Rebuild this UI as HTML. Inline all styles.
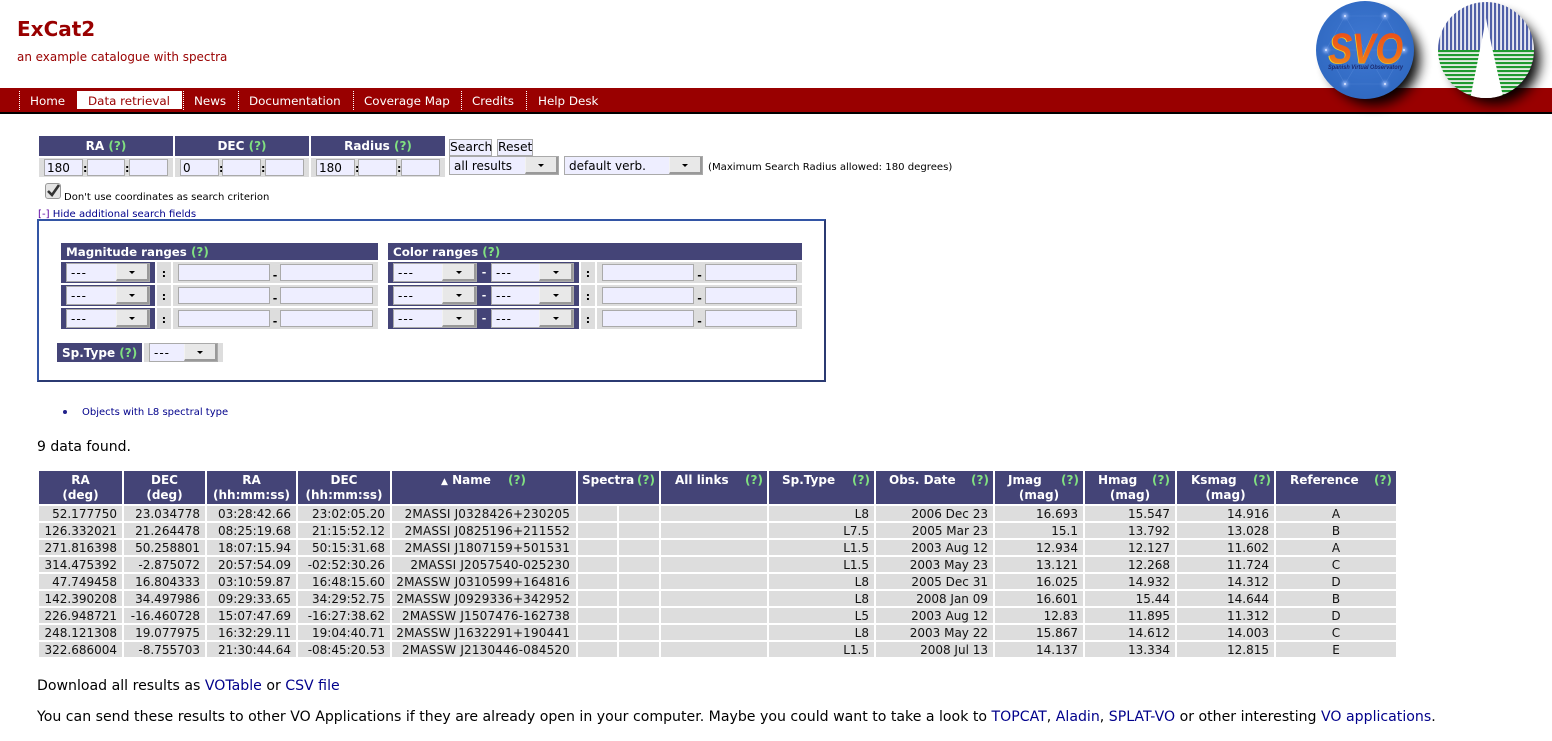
<!DOCTYPE html>
<html><head><meta charset="utf-8"><title>ExCat2</title>
<style>
html,body{margin:0;padding:0;background:#fff;width:1552px;height:741px;overflow:hidden}
body{font-family:"DejaVu Sans",sans-serif;color:#000;position:relative}
.a,.h,.g,.i,.s,.p{position:absolute;box-sizing:border-box}
.t{position:absolute;white-space:nowrap;line-height:1}
a{color:#00008b;text-decoration:none}
.h{background:#444477;color:#fff;font-weight:bold;font-size:12px;white-space:nowrap}
.q{color:#80e080;font-weight:bold;font-size:12px}
.g{background:#dddddd}
.i{background:#eeeeff;border:1.5px solid #aaa;font-size:12px;line-height:16px;padding-left:2px;white-space:nowrap}
.s{background:#eeeeff;border:1px solid #aaa;font-size:12px;white-space:nowrap;line-height:18px;padding-left:4px}
.s u{position:absolute;top:0;bottom:0;right:0;background:#e8e8e8;border-right:2px solid #999;border-bottom:2px solid #999;border-left:1px solid #f2f2f2;text-decoration:none;box-sizing:border-box}
.s u:after{content:"";position:absolute;left:50%;top:50%;margin:-1px 0 0 -3px;border:3px solid transparent;border-top:3px solid #000;border-bottom:0}
.d{letter-spacing:1px}
.p{background:#444477}
.c{position:absolute;font-weight:bold;font-size:11px;line-height:12px;text-align:center}
#nav{position:absolute;left:0;top:88px;width:1552px;height:24px;background:#990000;border-bottom:2px solid #000;box-sizing:content-box}
#nav span{position:absolute;top:3px;height:18px;line-height:20px;color:#fff;font-size:11.9px;white-space:nowrap}
#nav i{position:absolute;top:3px;height:19px;border-left:1px dotted #fff}
table{position:absolute;left:37px;top:504px;border-collapse:separate;border-spacing:2px;table-layout:fixed;font-size:12px;width:1361px}
td{background:#ddd;height:13px;padding:2px 5px 0;line-height:13px;text-align:right;white-space:nowrap;overflow:hidden;color:#111}
td.m{text-align:center;padding:2px 0 0}
td.m2{letter-spacing:.17px;text-align:right;padding:2px 6px 0 0}
td.n{padding:0;height:15px}
td.n s{display:block;width:2px;height:15px;background:#fff;margin-left:39px}
.th{position:absolute;top:471px;height:33px;background:#444477;color:#fff;font-weight:bold;font-size:12px}
.th span{position:absolute;top:2px;line-height:15px;white-space:nowrap}
.th .l{top:17px;left:0;right:0;text-align:center}
.th .q{top:2px}
p{position:absolute;margin:0;font-size:14.11px;line-height:17px;white-space:nowrap;left:37px}
</style></head><body>

<div class="t" style="left:17px;top:18px;font-size:20px;font-weight:bold;color:#990000;line-height:22px">ExCat2</div>
<div class="t" style="left:17px;top:50px;font-size:11.95px;color:#990000;line-height:14px">an example catalogue with spectra</div>

<div id="nav">
<i style="left:19px"></i><span style="left:30px">Home</span>
<span style="left:77px;width:105px;background:#fff;color:#990000;padding-left:11px;box-sizing:border-box">Data retrieval</span>
<i style="left:183px"></i><span style="left:194px">News</span>
<i style="left:238px"></i><span style="left:249px">Documentation</span>
<i style="left:353px"></i><span style="left:364px">Coverage Map</span>
<i style="left:461px"></i><span style="left:472px">Credits</span>
<i style="left:526px"></i><span style="left:538px">Help Desk</span>
</div>

<svg style="position:absolute;left:1290px;top:0" width="262" height="125" viewBox="1290 0 262 125">
<defs>
<filter id="bl" x="-40%" y="-40%" width="180%" height="180%"><feGaussianBlur stdDeviation="6"/></filter>
<filter id="gl" x="-200%" y="-200%" width="500%" height="500%"><feGaussianBlur stdDeviation="1.6"/></filter>
<radialGradient id="sv" cx="50%" cy="45%" r="60%"><stop offset="0" stop-color="#3f78d2"/><stop offset="1" stop-color="#2f68c0"/></radialGradient>
<linearGradient id="or" x1="0" y1="0" x2="0" y2="1"><stop offset="0" stop-color="#e8481c"/><stop offset=".6" stop-color="#ee6a18"/><stop offset="1" stop-color="#f0a020"/></linearGradient>
<clipPath id="c2"><circle cx="1486" cy="50" r="48"/></clipPath>
<pattern id="vs" x="1486" y="0" width="4" height="4" patternUnits="userSpaceOnUse"><rect width="4" height="4" fill="#e8e9f2"/><rect x="0" width="2.1" height="4" fill="#5060a8"/></pattern>
<pattern id="hs" x="0" y="50" width="4" height="4" patternUnits="userSpaceOnUse"><rect width="4" height="4" fill="#e2ebe2"/><rect y="0" width="4" height="2.1" fill="#1f9a2f"/></pattern>
</defs>
<circle cx="1374" cy="59" r="46" fill="#000" filter="url(#bl)" opacity=".95"/>
<circle cx="1495" cy="59" r="45" fill="#000" filter="url(#bl)" opacity=".95"/>
<circle cx="1365" cy="50" r="49" fill="url(#sv)"/>
<g stroke="#6f9ce6" stroke-width=".6" fill="none" opacity=".35">
<path d="M1345 16L1385 16L1404 50L1385 84L1345 84L1326 50Z"/>
<path d="M1345 16L1365 50L1385 84M1385 16L1365 50L1345 84M1326 50L1404 50"/>
</g>
<g fill="#a8c4ff" filter="url(#gl)">
<circle cx="1345" cy="16" r="2.6"/><circle cx="1385" cy="16" r="2.6"/><circle cx="1326" cy="50" r="2.6"/><circle cx="1404" cy="50" r="2.6"/><circle cx="1345" cy="84" r="2.6"/><circle cx="1385" cy="84" r="2.6"/>
</g>
<g fill="#dfe8ff">
<circle cx="1345" cy="16" r="1"/><circle cx="1385" cy="16" r="1"/><circle cx="1326" cy="50" r="1"/><circle cx="1404" cy="50" r="1"/><circle cx="1345" cy="84" r="1"/><circle cx="1385" cy="84" r="1"/>
</g>
<text x="1328" y="63.5" font-family="Liberation Sans,sans-serif" font-style="italic" font-weight="bold" font-size="43" fill="#f4d020" textLength="75" lengthAdjust="spacingAndGlyphs">SVO</text>
<text x="1329" y="63" font-family="Liberation Sans,sans-serif" font-style="italic" font-weight="bold" font-size="43" fill="url(#or)" textLength="74" lengthAdjust="spacingAndGlyphs">SVO</text>
<text x="1328" y="69" font-family="Liberation Sans,sans-serif" font-style="italic" font-weight="bold" font-size="6" fill="#1a2a70" textLength="75" lengthAdjust="spacingAndGlyphs">Spanish Virtual Observatory</text>

<g clip-path="url(#c2)">
<rect x="1438" y="0" width="96" height="50" fill="url(#vs)"/>
<rect x="1438" y="50" width="96" height="50" fill="url(#hs)"/>
<path d="M1486 18C1488 30 1497 70 1504 100L1470 100C1476 70 1484 30 1486 18Z" fill="#fff"/>
</g>
</svg>

<!-- search top -->
<div class="h" style="left:39px;top:136px;width:134px;height:20px;line-height:20px;text-align:center">RA <span class="q">(?)</span></div>
<div class="h" style="left:175px;top:136px;width:134px;height:20px;line-height:20px;text-align:center">DEC <span class="q">(?)</span></div>
<div class="h" style="left:311px;top:136px;width:134px;height:20px;line-height:20px;text-align:center">Radius <span class="q">(?)</span></div>
<div class="g" style="left:39px;top:158px;width:134px;height:19px"></div>
<div class="g" style="left:175px;top:158px;width:134px;height:19px"></div>
<div class="g" style="left:311px;top:158px;width:134px;height:19px"></div>
<div class="i" style="left:44px;top:159px;width:39px;height:17px">180</div><div class="c" style="left:83px;top:163px;width:4px">:</div>
<div class="i" style="left:87px;top:159px;width:38px;height:17px"></div><div class="c" style="left:125px;top:163px;width:4px">:</div>
<div class="i" style="left:129px;top:159px;width:39px;height:17px"></div>
<div class="i" style="left:180px;top:159px;width:39px;height:17px">0</div><div class="c" style="left:219px;top:163px;width:3px">:</div>
<div class="i" style="left:222px;top:159px;width:39px;height:17px"></div><div class="c" style="left:261px;top:163px;width:4px">:</div>
<div class="i" style="left:265px;top:159px;width:39px;height:17px"></div>
<div class="i" style="left:316px;top:159px;width:39px;height:17px">180</div><div class="c" style="left:355px;top:163px;width:3px">:</div>
<div class="i" style="left:358px;top:159px;width:39px;height:17px"></div><div class="c" style="left:397px;top:163px;width:4px">:</div>
<div class="i" style="left:401px;top:159px;width:39px;height:17px"></div>

<div class="i" style="left:449px;top:139px;width:43px;height:17px;padding:0;text-align:center;font-size:12.3px;line-height:14px">Search</div>
<div class="i" style="left:497px;top:139px;width:36px;height:17px;padding:0;text-align:center;font-size:12.3px;line-height:14px">Reset</div>
<div class="s" style="left:449px;top:156px;width:110px;height:19px">all results<u style="width:33px"></u></div>
<div class="s" style="left:564px;top:156px;width:139px;height:19px">default verb.<u style="width:33px"></u></div>
<div class="t" style="left:708px;top:161px;font-size:10.1px;line-height:13px">(Maximum Search Radius allowed: 180 degrees)</div>

<div class="a" style="left:45px;top:183px;width:16px;height:16px;background:#e4e4e4;border:1px solid #999;border-radius:3px"></div>
<svg style="position:absolute;left:45px;top:183px" width="17" height="16"><path d="M3 8L7 12L14 2" fill="none" stroke="#333" stroke-width="2.6"/></svg>
<div class="t" style="left:64px;top:191px;font-size:10px;line-height:13px">Don't use coordinates as search criterion</div>
<div class="t" style="left:38px;top:208px;font-size:10.1px;line-height:13px;color:#00008b"><span style="color:#5a00a0">[-]</span> Hide additional search fields</div>

<!-- box -->
<div class="a" style="left:37px;top:219px;width:789px;height:163px;border:2px solid #2b3a72;border-top-color:#3355a5;border-left-color:#3355a5"></div>

<div class="h" style="left:61px;top:243px;width:317px;height:17px;line-height:19px;padding-left:5px;font-size:11.8px">Magnitude ranges <span class="q">(?)</span></div>
<div class="h" style="left:388px;top:243px;width:414px;height:17px;line-height:19px;padding-left:5px;font-size:11.9px">Color ranges <span class="q">(?)</span></div>

<!-- row 1 -->
<div class="p" style="left:61px;top:262px;width:94px;height:21px"></div>
<div class="s d" style="left:66px;top:263px;width:84px;height:19px">---<u style="width:33px"></u></div>
<div class="g" style="left:157px;top:262px;width:14px;height:21px"></div><div class="c" style="left:157px;top:268px;width:14px">:</div>
<div class="g" style="left:173px;top:262px;width:205px;height:21px"></div>
<div class="i" style="left:178px;top:264px;width:92px;height:17px"></div><div class="c" style="left:270px;top:270px;width:10px">-</div>
<div class="i" style="left:280px;top:264px;width:93px;height:17px"></div>
<div class="p" style="left:388px;top:262px;width:191px;height:21px"></div>
<div class="s d" style="left:393px;top:263px;width:84px;height:19px">---<u style="width:34px"></u></div><div class="c" style="left:477px;top:267px;width:14px;color:#fff">-</div>
<div class="s d" style="left:491px;top:263px;width:83px;height:19px">---<u style="width:34px"></u></div>
<div class="g" style="left:581px;top:262px;width:14px;height:21px"></div><div class="c" style="left:581px;top:268px;width:14px">:</div>
<div class="g" style="left:597px;top:262px;width:205px;height:21px"></div>
<div class="i" style="left:602px;top:264px;width:92px;height:17px"></div><div class="c" style="left:694px;top:270px;width:11px">-</div>
<div class="i" style="left:705px;top:264px;width:92px;height:17px"></div>
<!-- row 2 -->
<div class="p" style="left:61px;top:285px;width:94px;height:21px"></div>
<div class="s d" style="left:66px;top:286px;width:84px;height:19px">---<u style="width:33px"></u></div>
<div class="g" style="left:157px;top:285px;width:14px;height:21px"></div><div class="c" style="left:157px;top:291px;width:14px">:</div>
<div class="g" style="left:173px;top:285px;width:205px;height:21px"></div>
<div class="i" style="left:178px;top:287px;width:92px;height:17px"></div><div class="c" style="left:270px;top:293px;width:10px">-</div>
<div class="i" style="left:280px;top:287px;width:93px;height:17px"></div>
<div class="p" style="left:388px;top:285px;width:191px;height:21px"></div>
<div class="s d" style="left:393px;top:286px;width:84px;height:19px">---<u style="width:34px"></u></div><div class="c" style="left:477px;top:290px;width:14px;color:#fff">-</div>
<div class="s d" style="left:491px;top:286px;width:83px;height:19px">---<u style="width:34px"></u></div>
<div class="g" style="left:581px;top:285px;width:14px;height:21px"></div><div class="c" style="left:581px;top:291px;width:14px">:</div>
<div class="g" style="left:597px;top:285px;width:205px;height:21px"></div>
<div class="i" style="left:602px;top:287px;width:92px;height:17px"></div><div class="c" style="left:694px;top:293px;width:11px">-</div>
<div class="i" style="left:705px;top:287px;width:92px;height:17px"></div>
<!-- row 3 -->
<div class="p" style="left:61px;top:308px;width:94px;height:21px"></div>
<div class="s d" style="left:66px;top:309px;width:84px;height:19px">---<u style="width:33px"></u></div>
<div class="g" style="left:157px;top:308px;width:14px;height:21px"></div><div class="c" style="left:157px;top:314px;width:14px">:</div>
<div class="g" style="left:173px;top:308px;width:205px;height:21px"></div>
<div class="i" style="left:178px;top:310px;width:92px;height:17px"></div><div class="c" style="left:270px;top:316px;width:10px">-</div>
<div class="i" style="left:280px;top:310px;width:93px;height:17px"></div>
<div class="p" style="left:388px;top:308px;width:191px;height:21px"></div>
<div class="s d" style="left:393px;top:309px;width:84px;height:19px">---<u style="width:34px"></u></div><div class="c" style="left:477px;top:313px;width:14px;color:#fff">-</div>
<div class="s d" style="left:491px;top:309px;width:83px;height:19px">---<u style="width:34px"></u></div>
<div class="g" style="left:581px;top:308px;width:14px;height:21px"></div><div class="c" style="left:581px;top:314px;width:14px">:</div>
<div class="g" style="left:597px;top:308px;width:205px;height:21px"></div>
<div class="i" style="left:602px;top:310px;width:92px;height:17px"></div><div class="c" style="left:694px;top:316px;width:11px">-</div>
<div class="i" style="left:705px;top:310px;width:92px;height:17px"></div>

<div class="h" style="left:57px;top:343px;width:85px;height:19px;line-height:21px;padding-left:5px">Sp.Type <span class="q">(?)</span></div>
<div class="g" style="left:144px;top:343px;width:79px;height:19px"></div>
<div class="s d" style="left:149px;top:343px;width:69px;height:19px">---<u style="width:33px"></u></div>

<div class="a" style="left:63px;top:410px;width:4px;height:4px;border-radius:50%;background:#22228b"></div>
<div class="t" style="left:82px;top:406px;font-size:10px;line-height:13px;color:#00008b">Objects with L8 spectral type</div>

<div class="t" style="left:37px;top:439px;font-size:14px;line-height:17px">9 data found.</div>

<!-- table headers -->
<div class="th" style="left:39px;width:83px"><span style="left:0;right:0;text-align:center">RA</span><span class="l">(deg)</span></div>
<div class="th" style="left:124px;width:81px"><span style="left:0;right:0;text-align:center">DEC</span><span class="l">(deg)</span></div>
<div class="th" style="left:207px;width:89px"><span style="left:0;right:0;text-align:center">RA</span><span class="l">(hh:mm:ss)</span></div>
<div class="th" style="left:298px;width:92px"><span style="left:0;right:0;text-align:center">DEC</span><span class="l">(hh:mm:ss)</span></div>
<div class="th" style="left:392px;width:184px"><span style="left:49px"><span style="position:static;font-size:9px">▲</span> Name</span><span class="q" style="left:116px">(?)</span></div>
<div class="th" style="left:578px;width:81px"><span style="left:4px">Spectra</span><span class="q" style="left:59px">(?)</span></div>
<div class="th" style="left:661px;width:106px"><span style="left:14px">All links</span><span class="q" style="left:84px">(?)</span></div>
<div class="th" style="left:769px;width:105px"><span style="left:13px">Sp.Type</span><span class="q" style="left:83px">(?)</span></div>
<div class="th" style="left:876px;width:117px"><span style="left:13px">Obs. Date</span><span class="q" style="left:95px">(?)</span></div>
<div class="th" style="left:995px;width:88px"><span style="left:13px">Jmag</span><span class="q" style="left:66px">(?)</span><span class="l">(mag)</span></div>
<div class="th" style="left:1085px;width:90px"><span style="left:13px">Hmag</span><span class="q" style="left:67px">(?)</span><span class="l">(mag)</span></div>
<div class="th" style="left:1177px;width:97px"><span style="left:14px">Ksmag</span><span class="q" style="left:76px">(?)</span><span class="l">(mag)</span></div>
<div class="th" style="left:1276px;width:120px"><span style="left:14px">Reference</span><span class="q" style="left:98px">(?)</span></div>

<table>
<colgroup><col style="width:83px"><col style="width:81px"><col style="width:89px"><col style="width:92px"><col style="width:184px"><col style="width:81px"><col style="width:106px"><col style="width:105px"><col style="width:117px"><col style="width:88px"><col style="width:90px"><col style="width:97px"><col style="width:120px"></colgroup>
<tr><td>52.177750</td><td>23.034778</td><td>03:28:42.66</td><td>23:02:05.20</td><td class="m m2">2MASSI J0328426+230205</td><td class="n"><s></s></td><td></td><td>L8</td><td>2006 Dec 23</td><td>16.693</td><td>15.547</td><td>14.916</td><td class="m">A</td></tr>
<tr><td>126.332021</td><td>21.264478</td><td>08:25:19.68</td><td>21:15:52.12</td><td class="m m2">2MASSI J0825196+211552</td><td class="n"><s></s></td><td></td><td>L7.5</td><td>2005 Mar 23</td><td>15.1</td><td>13.792</td><td>13.028</td><td class="m">B</td></tr>
<tr><td>271.816398</td><td>50.258801</td><td>18:07:15.94</td><td>50:15:31.68</td><td class="m m2">2MASSI J1807159+501531</td><td class="n"><s></s></td><td></td><td>L1.5</td><td>2003 Aug 12</td><td>12.934</td><td>12.127</td><td>11.602</td><td class="m">A</td></tr>
<tr><td>314.475392</td><td>-2.875072</td><td>20:57:54.09</td><td>-02:52:30.26</td><td class="m m2">2MASSI J2057540-025230</td><td class="n"><s></s></td><td></td><td>L1.5</td><td>2003 May 23</td><td>13.121</td><td>12.268</td><td>11.724</td><td class="m">C</td></tr>
<tr><td>47.749458</td><td>16.804333</td><td>03:10:59.87</td><td>16:48:15.60</td><td class="m m2">2MASSW J0310599+164816</td><td class="n"><s></s></td><td></td><td>L8</td><td>2005 Dec 31</td><td>16.025</td><td>14.932</td><td>14.312</td><td class="m">D</td></tr>
<tr><td>142.390208</td><td>34.497986</td><td>09:29:33.65</td><td>34:29:52.75</td><td class="m m2">2MASSW J0929336+342952</td><td class="n"><s></s></td><td></td><td>L8</td><td>2008 Jan 09</td><td>16.601</td><td>15.44</td><td>14.644</td><td class="m">B</td></tr>
<tr><td>226.948721</td><td>-16.460728</td><td>15:07:47.69</td><td>-16:27:38.62</td><td class="m m2">2MASSW J1507476-162738</td><td class="n"><s></s></td><td></td><td>L5</td><td>2003 Aug 12</td><td>12.83</td><td>11.895</td><td>11.312</td><td class="m">D</td></tr>
<tr><td>248.121308</td><td>19.077975</td><td>16:32:29.11</td><td>19:04:40.71</td><td class="m m2">2MASSW J1632291+190441</td><td class="n"><s></s></td><td></td><td>L8</td><td>2003 May 22</td><td>15.867</td><td>14.612</td><td>14.003</td><td class="m">C</td></tr>
<tr><td>322.686004</td><td>-8.755703</td><td>21:30:44.64</td><td>-08:45:20.53</td><td class="m m2">2MASSW J2130446-084520</td><td class="n"><s></s></td><td></td><td>L1.5</td><td>2008 Jul 13</td><td>14.137</td><td>13.334</td><td>12.815</td><td class="m">E</td></tr>
</table>

<p style="top:678px">Download all results as <a href="#">VOTable</a> or <a href="#">CSV file</a></p>
<p style="top:709px">You can send these results to other VO Applications if they are already open in your computer. Maybe you could want to take a look to <a href="#">TOPCAT</a>, <a href="#">Aladin</a>, <a href="#">SPLAT-VO</a> or other interesting <a href="#">VO applications</a>.</p>

</body></html>
